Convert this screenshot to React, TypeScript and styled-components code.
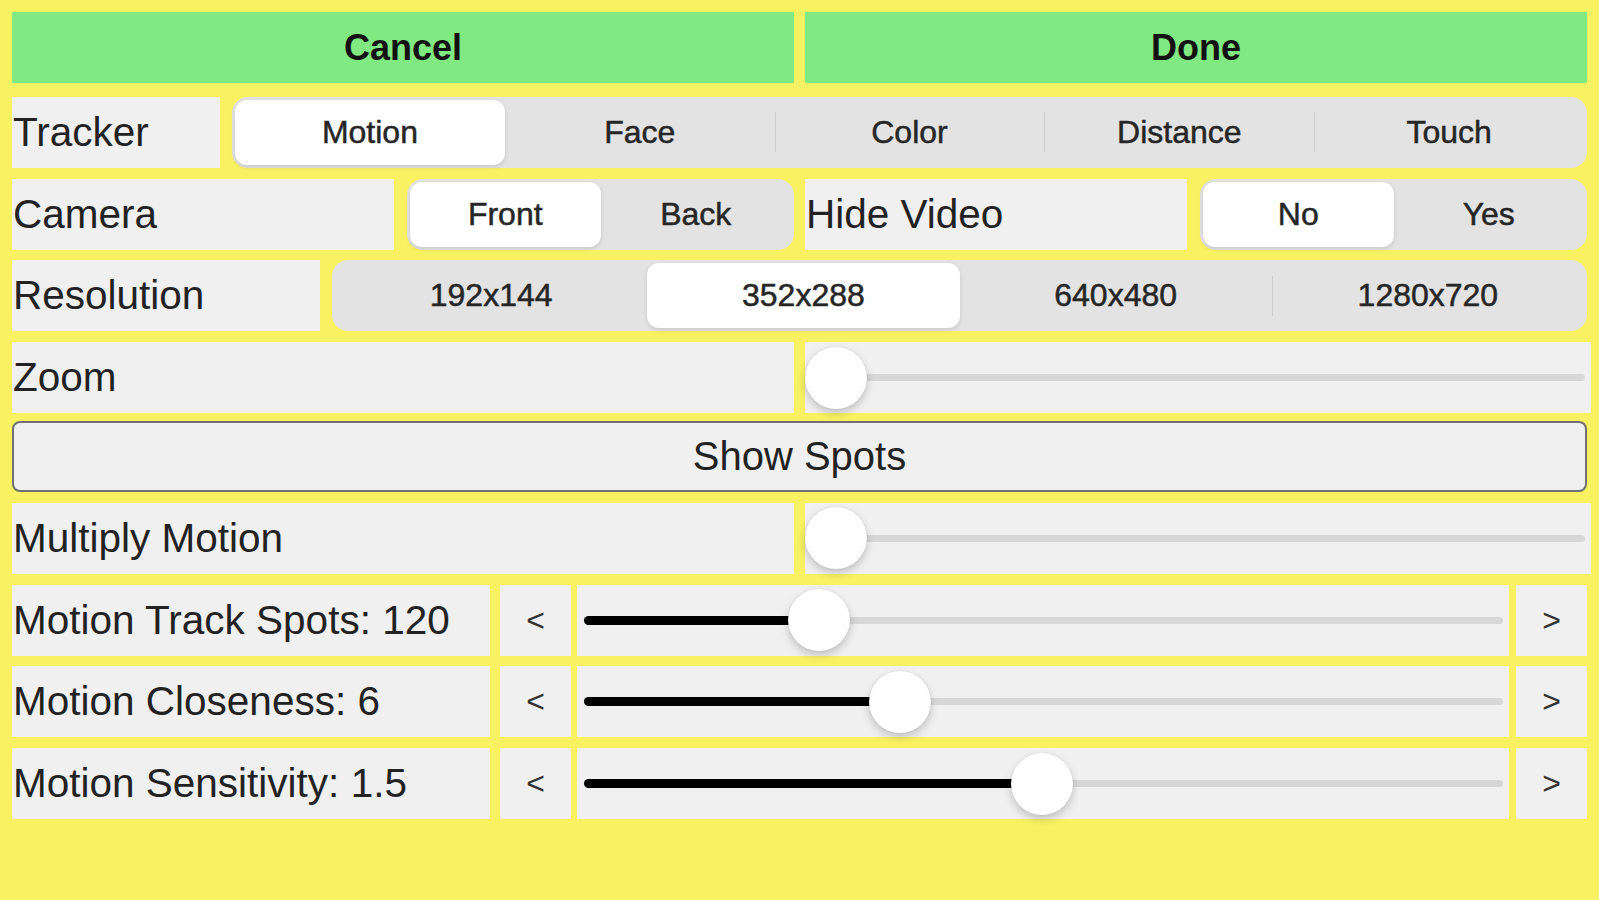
import React from 'react'
import styled, { createGlobalStyle } from 'styled-components'

const GlobalStyle = createGlobalStyle`
    html, body {
        margin: 0;
        padding: 0;
        background: #f8f162;
    }
    body {
        font-family: 'Liberation Sans', Arial, sans-serif;
    }
`

const Screen = styled.div`
    width: 1599px;
    height: 900px;
    box-sizing: border-box;
    padding: 12px 12px 0 12px;
    display: flex;
    flex-direction: column;
    gap: 10.8px;
    background: #f8f162;
`

const Row = styled.div<{ $gap?: number; $after?: number }>`
    display: flex;
    height: 71px;
    flex-shrink: 0;
    gap: ${(p) => p.$gap ?? 12}px;
    margin-bottom: ${(p) => p.$after ?? 0}px;
`

const Half = styled.div`
    flex: 1;
    display: flex;
    gap: 13px;
`

const ActionButton = styled.button`
    flex: 1;
    border: 0;
    margin: 0;
    background: #81e981;
    color: #111;
    font-family: 'Liberation Sans', Arial, sans-serif;
    font-weight: bold;
    font-size: 36px;
`

const Label = styled.div<{ $width?: number }>`
    ${(p) => (p.$width ? `width: ${p.$width}px; flex-shrink: 0;` : 'flex: 1;')}
    background: #f0f0f0;
    color: #222;
    font-size: 40.5px;
    display: flex;
    align-items: center;
    padding-left: 1px;
    box-sizing: border-box;
    white-space: nowrap;
`

const SegmentBar = styled.div`
    flex: 1;
    display: flex;
    background: #e3e3e3;
    border-radius: 16px;
    padding: 3px;
    box-sizing: border-box;
`

const Segment = styled.div<{ $active?: boolean; $divider?: boolean }>`
    flex: 1;
    position: relative;
    display: flex;
    align-items: center;
    justify-content: center;
    font-size: 32px;
    color: #262626;
    -webkit-text-stroke: 0.5px #262626;
    border-radius: 12px;
    background: ${(p) => (p.$active ? '#fff' : 'transparent')};
    box-shadow: ${(p) => (p.$active ? '0 2px 5px rgba(0,0,0,0.12)' : 'none')};

    &::before {
        content: '';
        display: ${(p) => (p.$divider ? 'block' : 'none')};
        position: absolute;
        left: 0;
        top: 50%;
        width: 1px;
        height: 40px;
        margin-top: -20px;
        background: #cdcdcd;
    }
`

const WideButton = styled.button`
    flex: 1;
    margin: 0;
    background: #f0f0f0;
    border: 2px solid #707070;
    border-radius: 8px;
    color: #222;
    font-family: 'Liberation Sans', Arial, sans-serif;
    font-size: 40px;
`

const StepButton = styled.div`
    width: 71px;
    flex-shrink: 0;
    background: #f0f0f0;
    color: #333;
    font-size: 32px;
    display: flex;
    align-items: center;
    justify-content: center;
`

const SliderBox = styled.div<{ $inset: number; $bleed?: number }>`
    flex: 1;
    display: flex;
    align-items: center;
    background: #f0f0f0;
    padding: 0 6px 0 ${(p) => p.$inset}px;
    margin-right: ${(p) => -(p.$bleed ?? 0)}px;
`

const Track = styled.div`
    flex: 1;
    position: relative;
    height: 7px;
    border-radius: 4px;
    background: #d7d7d7;
`

const Fill = styled.div`
    position: absolute;
    left: 0;
    top: -1px;
    height: 9px;
    border-radius: 5px;
    background: #000;
`

const Thumb = styled.div`
    position: absolute;
    top: 50%;
    width: 62px;
    height: 62px;
    margin-top: -31px;
    border-radius: 50%;
    background: #fff;
    box-shadow: 0 4px 9px rgba(0, 0, 0, 0.2), 0 0 1px rgba(0, 0, 0, 0.15);
`

interface SegmentedProps {
    options: string[]
    selected: number
}

function Segmented({ options, selected }: SegmentedProps) {
    return (
        <SegmentBar>
            {options.map((o, i) => (
                <Segment
                    key={o}
                    $active={i === selected}
                    $divider={i > 0 && i !== selected && i - 1 !== selected}
                >
                    {o}
                </Segment>
            ))}
        </SegmentBar>
    )
}

interface SliderProps {
    value: number
    inset: number
    bleed?: number
}

function Slider({ value, inset, bleed }: SliderProps) {
    return (
        <SliderBox $inset={inset} $bleed={bleed}>
            <Track>
                {value > 0 && <Fill style={{ width: `calc(${value} * (100% - 62px) + 31px)` }} />}
                <Thumb style={{ left: `calc(${value} * (100% - 62px))` }} />
            </Track>
        </SliderBox>
    )
}

const steppers = [
    { label: 'Motion Track Spots: 120', value: 0.238 },
    { label: 'Motion Closeness: 6', value: 0.332 },
    { label: 'Motion Sensitivity: 1.5', value: 0.498 },
]

export default function App() {
    return (
        <>
            <GlobalStyle />
            <Screen>
                <Row $gap={11} $after={3}>
                    <ActionButton>Cancel</ActionButton>
                    <ActionButton>Done</ActionButton>
                </Row>
                <Row>
                    <Label $width={208}>Tracker</Label>
                    <Segmented options={['Motion', 'Face', 'Color', 'Distance', 'Touch']} selected={0} />
                </Row>
                <Row $gap={11}>
                    <Half>
                        <Label>Camera</Label>
                        <Segmented options={['Front', 'Back']} selected={0} />
                    </Half>
                    <Half>
                        <Label>Hide Video</Label>
                        <Segmented options={['No', 'Yes']} selected={0} />
                    </Half>
                </Row>
                <Row>
                    <Label $width={308}>Resolution</Label>
                    <Segmented options={['192x144', '352x288', '640x480', '1280x720']} selected={1} />
                </Row>
                <Row $gap={11} $after={-3}>
                    <Label $width={782}>Zoom</Label>
                    <Slider value={0} inset={0} bleed={4} />
                </Row>
                <Row>
                    <WideButton>Show Spots</WideButton>
                </Row>
                <Row $gap={11}>
                    <Label $width={782}>Multiply Motion</Label>
                    <Slider value={0} inset={0} bleed={4} />
                </Row>
                {steppers.map((s) => (
                    <Row key={s.label} $gap={0}>
                        <Label $width={478}>{s.label}</Label>
                        <StepButton style={{ marginLeft: 10, marginRight: 6 }}>&lt;</StepButton>
                        <Slider value={s.value} inset={7} />
                        <StepButton style={{ marginLeft: 7 }}>&gt;</StepButton>
                    </Row>
                ))}
            </Screen>
        </>
    )
}
